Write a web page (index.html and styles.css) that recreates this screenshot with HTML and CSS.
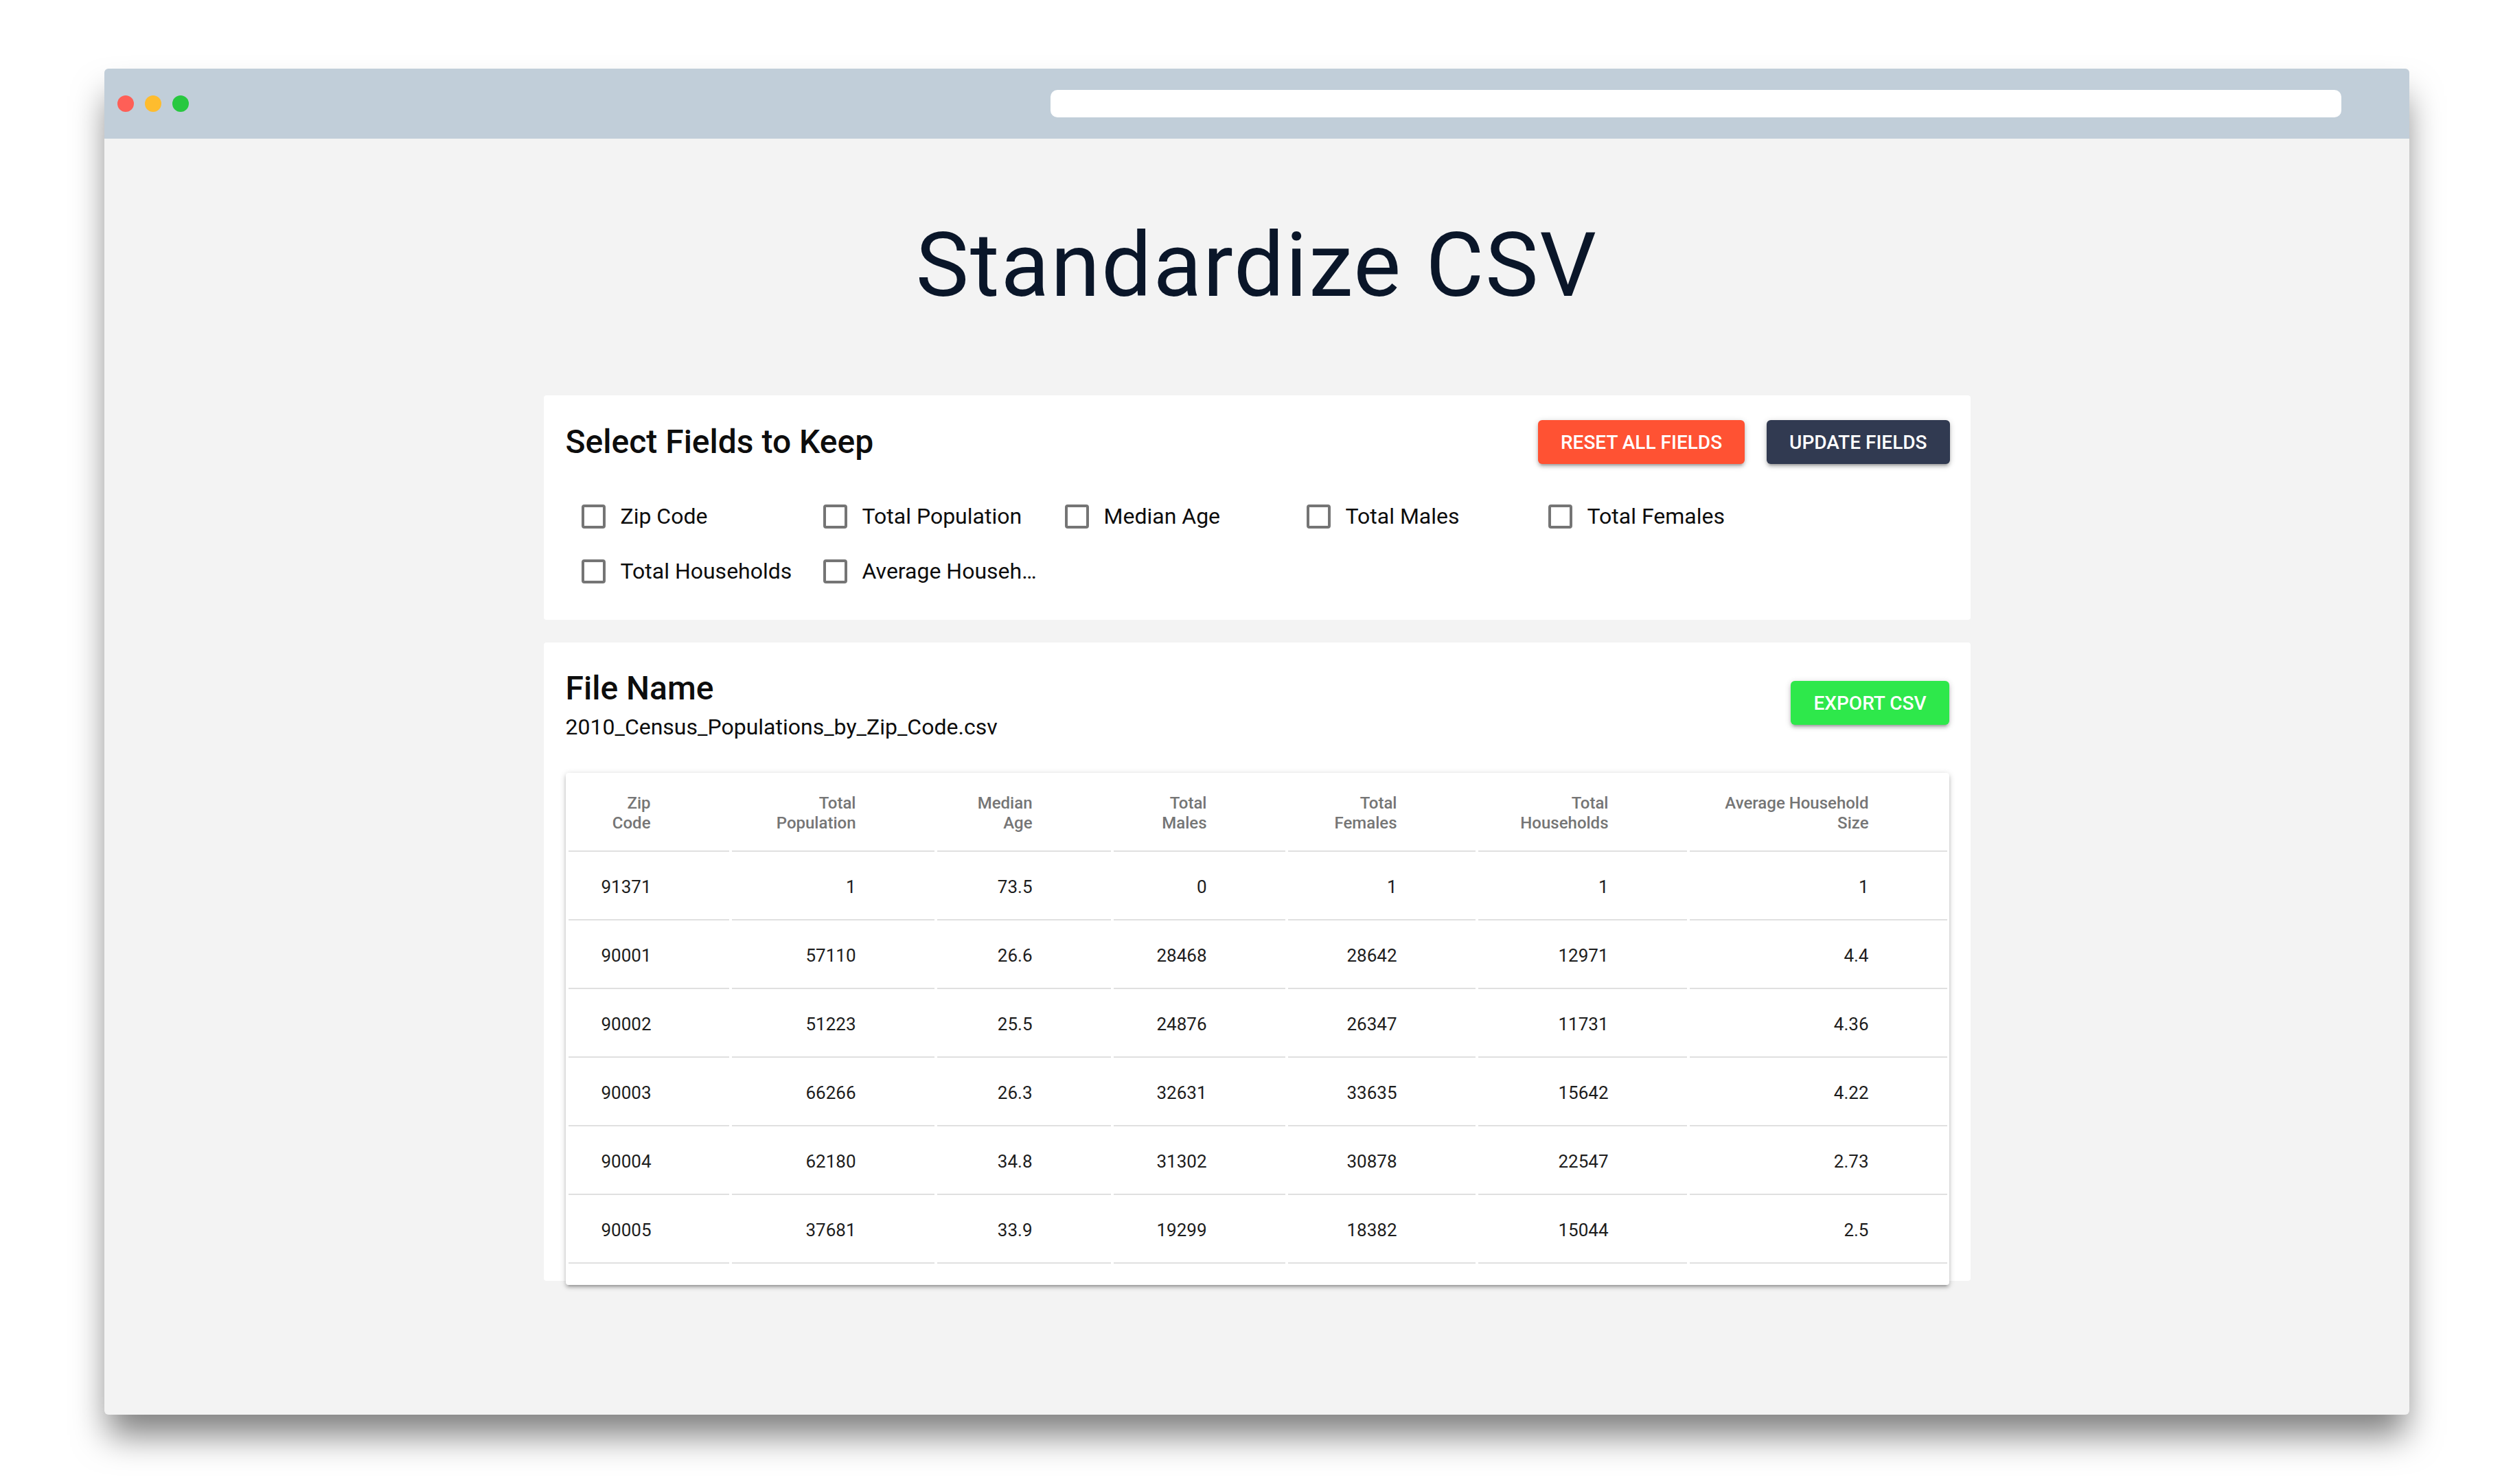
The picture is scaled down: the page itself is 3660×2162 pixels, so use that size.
FILE: index.html
```html
<!DOCTYPE html>
<html lang="en">
<head>
<meta charset="utf-8">
<title>Standardize CSV</title>
<link rel="stylesheet" href="styles.css">
</head>
<body>
<div class="window">
  <div class="titlebar">
    <div class="dots">
      <span class="dot dot-red"></span>
      <span class="dot dot-yellow"></span>
      <span class="dot dot-green"></span>
    </div>
    <div class="address"></div>
  </div>
  <div class="content">
    <h1 class="page-title">Standardize CSV</h1>

    <section class="card card-fields">
      <div class="card-head">
        <h2 class="card-title">Select Fields to Keep</h2>
        <div class="actions">
          <button class="btn btn-reset">Reset all fields</button>
          <button class="btn btn-update">Update fields</button>
        </div>
      </div>
      <div class="fields">
        <label class="field"><span class="box"></span><span class="field-label">Zip Code</span></label>
        <label class="field"><span class="box"></span><span class="field-label">Total Population</span></label>
        <label class="field"><span class="box"></span><span class="field-label">Median Age</span></label>
        <label class="field"><span class="box"></span><span class="field-label">Total Males</span></label>
        <label class="field"><span class="box"></span><span class="field-label">Total Females</span></label>
        <label class="field"><span class="box"></span><span class="field-label">Total Households</span></label>
        <label class="field"><span class="box"></span><span class="field-label">Average Household Size</span></label>
      </div>
    </section>

    <section class="card card-file">
      <div class="file-head">
        <div>
          <h2 class="card-title">File Name</h2>
          <p class="file-name">2010_Census_Populations_by_Zip_Code.csv</p>
        </div>
        <button class="btn btn-export">Export CSV</button>
      </div>
      <div class="paper">
        <table class="data">
          <colgroup>
            <col class="w1"><col class="w2"><col class="w3"><col class="w4"><col class="w5"><col class="w6"><col class="w7">
          </colgroup>
          <thead>
            <tr>
              <th>Zip<br>Code</th>
              <th>Total<br>Population</th>
              <th>Median<br>Age</th>
              <th>Total<br>Males</th>
              <th>Total<br>Females</th>
              <th>Total<br>Households</th>
              <th>Average Household<br>Size</th>
            </tr>
          </thead>
          <tbody>
            <tr><td>91371</td><td>1</td><td>73.5</td><td>0</td><td>1</td><td>1</td><td>1</td></tr>
            <tr><td>90001</td><td>57110</td><td>26.6</td><td>28468</td><td>28642</td><td>12971</td><td>4.4</td></tr>
            <tr><td>90002</td><td>51223</td><td>25.5</td><td>24876</td><td>26347</td><td>11731</td><td>4.36</td></tr>
            <tr><td>90003</td><td>66266</td><td>26.3</td><td>32631</td><td>33635</td><td>15642</td><td>4.22</td></tr>
            <tr><td>90004</td><td>62180</td><td>34.8</td><td>31302</td><td>30878</td><td>22547</td><td>2.73</td></tr>
            <tr><td>90005</td><td>37681</td><td>33.9</td><td>19299</td><td>18382</td><td>15044</td><td>2.5</td></tr>
          </tbody>
        </table>
      </div>
    </section>
  </div>
</div>
</body>
</html>
```
FILE: styles.css
```css
* { box-sizing: border-box; }

html, body {
  margin: 0;
  background: #ffffff;
}

body {
  width: 3660px;
  height: 2162px;
  padding: 100px 151px 0 152px;
  font-family: Roboto, "Liberation Sans", Arial, sans-serif;
  overflow: hidden;
}

.window {
  width: 3357px;
  height: 1961px;
  display: flex;
  flex-direction: column;
  border-radius: 6px;
  background: #f3f3f3;
  box-shadow: 0 35px 50px -5px rgba(0, 0, 0, 0.5);
}

.titlebar {
  height: 102px;
  flex: none;
  display: flex;
  align-items: center;
  background: #c1ced9;
  border-radius: 6px 6px 0 0;
  padding-left: 19px;
}

.dots {
  display: flex;
  gap: 16px;
}

.dot {
  width: 24px;
  height: 24px;
  border-radius: 50%;
}
.dot-red { background: #fe5f57; }
.dot-yellow { background: #febc2e; }
.dot-green { background: #28c840; }

.address {
  margin-left: auto;
  margin-right: 99px;
  width: 1880px;
  height: 40px;
  border-radius: 10px;
  background: #ffffff;
}

.content {
  flex: 1;
  padding-top: 120px;
  display: flex;
  flex-direction: column;
  align-items: center;
  border-radius: 0 0 6px 6px;
}

.page-title {
  margin: 0;
  font-size: 130px;
  line-height: 130px;
  font-weight: 400;
  letter-spacing: 2px;
  color: #0a1629;
}

.card {
  width: 2078px;
  background: #ffffff;
  border-radius: 4px;
}

.card-fields {
  margin-top: 124px;
  height: 327px;
  padding: 36px 30px 0 32px;
}

.card-head {
  display: flex;
  align-items: center;
  justify-content: space-between;
  height: 64px;
}

.card-title {
  margin: 0;
  font-size: 48px;
  line-height: 48px;
  font-weight: 500;
  color: #0d0d0d;
}

.actions {
  display: flex;
  gap: 32px;
}

.btn {
  height: 64px;
  padding: 0 33px;
  border: none;
  border-radius: 6px;
  font-family: Roboto, "Liberation Sans", Arial, sans-serif;
  font-size: 28px;
  font-weight: 500;
  letter-spacing: 0;
  text-transform: uppercase;
  color: #ffffff;
  box-shadow: 0 2px 10px rgba(0, 0, 0, 0.2), 0 4px 4px rgba(0, 0, 0, 0.14), 0 6px 2px -4px rgba(0, 0, 0, 0.12);
}
.btn-reset { background: #ff5233; }
.btn-update { background: #313a51; }
.btn-export { background: #2ee84b; margin-top: 13px; }

.fields {
  margin-top: 36px;
  display: grid;
  grid-template-columns: repeat(5, 352px);
  grid-auto-rows: 80px;
}

.field {
  display: flex;
  align-items: center;
}

.box {
  flex: none;
  margin-left: 23px;
  width: 35px;
  height: 35px;
  border: 4px solid #757575;
  border-radius: 4px;
}

.field-label {
  margin-left: 22px;
  max-width: 258px;
  white-space: nowrap;
  overflow: hidden;
  text-overflow: ellipsis;
  font-size: 32px;
  line-height: 42px;
  color: #0d0d0d;
}

.card-file {
  margin-top: 33px;
  height: 930px;
  padding: 43px 31px 0 32px;
}

.file-head {
  display: flex;
  align-items: flex-start;
  justify-content: space-between;
}

.file-name {
  margin: 16px 0 0;
  font-size: 32px;
  line-height: 32px;
  color: #0d0d0d;
}

.paper {
  margin-top: 51px;
  height: 746px;
  overflow: hidden;
  background: #ffffff;
  border-radius: 4px;
  box-shadow: 0 2px 10px rgba(0, 0, 0, 0.2), 0 4px 4px rgba(0, 0, 0, 0.14), 0 6px 2px -4px rgba(0, 0, 0, 0.12);
}

.data {
  width: 100%;
  table-layout: fixed;
  border-collapse: separate;
  border-spacing: 4px;
}

.w1 { width: 234px; }
.w2 { width: 295px; }
.w3 { width: 253px; }
.w4 { width: 250px; }
.w5 { width: 273px; }
.w6 { width: 304px; }
.w7 { width: 375px; }

.data th,
.data td {
  padding: 0 114px 0 48px;
  text-align: right;
  white-space: nowrap;
  border-bottom: 2px solid #e0e0e0;
}

.data th {
  height: 111px;
  font-size: 24px;
  line-height: 29px;
  font-weight: 500;
  color: #757575;
}

.data td {
  height: 96px;
  font-size: 26px;
  line-height: 30px;
  font-weight: 400;
  color: #1d1d1d;
}
```
